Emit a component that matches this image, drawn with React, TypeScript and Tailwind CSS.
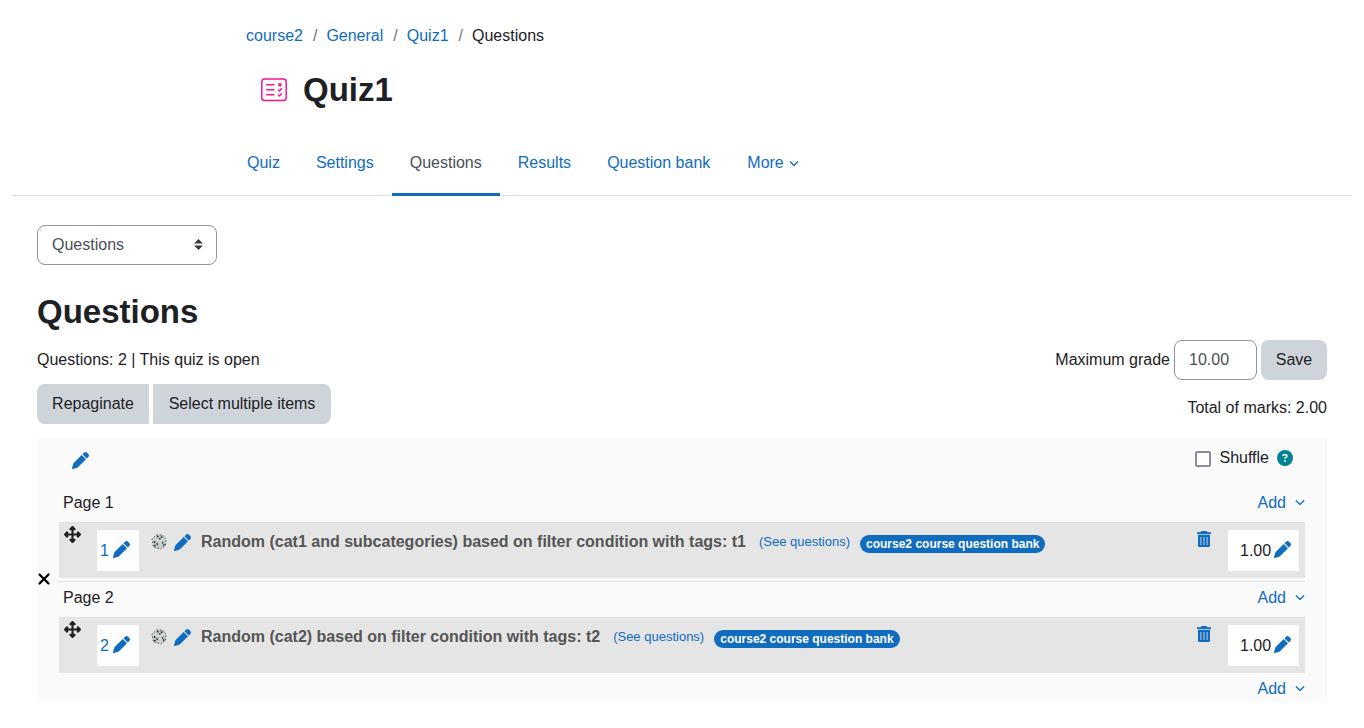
import { FaPen, FaUpDownLeftRight, FaXmark, FaChevronDown, FaCircleQuestion } from 'react-icons/fa6';

const breadcrumbs = ['course2', 'General', 'Quiz1'];

const tabs = ['Quiz', 'Settings', 'Questions', 'Results', 'Question bank'];

const slots = [
  {
    page: 1,
    name: 'Random (cat1 and subcategories) based on filter condition with tags: t1',
    bank: 'course2 course question bank',
    mark: '1.00',
  },
  {
    page: 2,
    name: 'Random (cat2) based on filter condition with tags: t2',
    bank: 'course2 course question bank',
    mark: '1.00',
  },
];

function QuizIcon() {
  return (
    <svg viewBox="0 0 26 24" className="w-[26px] h-6" fill="none" stroke="#f7158b" strokeWidth="1.5" strokeLinecap="round">
      <rect x="0.8" y="1" width="24.4" height="21.6" rx="2.8" />
      <path d="M5.7 6.8h7.2M5.7 11.8h7.2M5.7 16.8h7.2" />
      <path d="M18 5.8l1.8 1.8M19.8 5.8l-1.8 1.8" strokeWidth="1.7" />
      <path d="M17.5 12l1 1 2-2.2M17.5 17l1 1 2-2.2" />
    </svg>
  );
}

function TrashIcon() {
  return (
    <svg viewBox="0 0 14 16" className="w-[14px] h-4" fill="currentColor">
      <path d="M4.5 0h5l.8 1.2H14v1.9H0V1.2h3.7z" />
      <path
        fillRule="evenodd"
        d="M1 3.8h12v10.7a1.500 1.500 0 0 1-1.500 1.500h-9A1.500 1.500 0 0 1 1 14.500zM3.500 6v8h.8V6zM6.600 6v8h.8V6zM9.700 6v8h.8V6z"
      />
    </svg>
  );
}

function DiceIcon() {
  return (
    <svg viewBox="0 0 16 16" className="w-4 h-4 shrink-0">
      <path d="M5.5 1h6l3.5 4-.5 6.5L9.500 15 2.500 13 1 5z" fill="#c0c9c5" />
      <path
        d="M5.5 1h6l3.5 4-.5 6.5L9.500 15 2.500 13 1 5z"
        fill="none"
        stroke="#3c4441"
        strokeWidth="0.9"
        strokeDasharray="1.6 1.6"
      />
      <path d="M1.5 5l7.5 1.7L14.5 5M9 6.700L9.300 14.500" fill="none" stroke="#e3e8e6" strokeWidth="0.8" />
      <path
        d="M6 2.200h1.600v1.100H6zM9.800 2.600h1.600v1.100H9.800zM8 4.600h1.600v1H8zM3 7.200h1.300v1.500H3zM5.500 9.300h1.300v1.500H5.500zM3.200 11h1.300v1.300H3.200zM11 8h1.100v1.500H11zM12.300 10.300h1.100v1.500h-1.100z"
        fill="#000"
      />
    </svg>
  );
}

function AddMenu() {
  return (
    <button type="button" className="flex items-center gap-[9px] text-[#0f6cbf]">
      Add
      <FaChevronDown className="w-[10px] h-[10px] mb-0.5" />
    </button>
  );
}

function SlotRow({ slot }: { slot: (typeof slots)[number] }) {
  return (
    <div className="flex h-14 border-t border-[#dee2e6] bg-[#e5e5e5] pt-[7px] pl-[5px] pr-1.5">
      <button type="button" aria-label="Move" className="self-start -mt-1 mr-4 text-[#1d2125]">
        <FaUpDownLeftRight className="w-[17px] h-[17px]" />
      </button>
      <div className="flex items-center gap-1 w-[42px] h-[41px] pl-[3px] bg-[#fdfdfd] text-[#0f6cbf]">
        <span>{slot.page}</span>
        <button type="button" aria-label="Edit question number" className="mb-0.5">
          <FaPen className="w-[17px] h-[17px]" />
        </button>
      </div>
      <div className="flex flex-1 items-center h-6 pl-3">
        <DiceIcon />
        <button type="button" aria-label="Edit question" className="ml-[7px] mr-[10px] text-[#0f6cbf]">
          <FaPen className="w-[17px] h-[17px]" />
        </button>
        <span className="font-bold text-[#555]">{slot.name}</span>
        <a href="#" className="ml-[13px] text-[13px] text-[#0f6cbf]">(See questions)</a>
        <a href="#" className="mt-1 ml-[10px] px-[6px] rounded-full bg-[#0f6cbf] text-xs leading-[18px] font-bold text-white">
          {slot.bank}
        </a>
      </div>
      <button type="button" aria-label="Delete" className="self-start mt-px mr-[17px] text-[#0f6cbf]">
        <TrashIcon />
      </button>
      <div className="flex items-center gap-[3px] w-[71px] h-[41px] pl-3 bg-white">
        <span>{slot.mark}</span>
        <button type="button" aria-label="Edit maximum mark" className="mb-0.5 text-[#0f6cbf]">
          <FaPen className="w-[17px] h-[17px]" />
        </button>
      </div>
    </div>
  );
}

export default function App() {
  return (
    <div className="px-3 pb-6 bg-white font-['Liberation_Sans',Arial,sans-serif] text-base leading-6 text-[#1d2125]">
      <header className="w-full max-w-[872px] mx-auto pt-6">
        <nav aria-label="Breadcrumb">
          <ol className="flex">
            {breadcrumbs.map((item) => (
              <li key={item} className="flex">
                <a href="#" className="text-[#0f6cbf]">{item}</a>
                <span className="pl-[10px] pr-[9px] text-[#6a737b]">/</span>
              </li>
            ))}
            <li aria-current="page">Questions</li>
          </ol>
        </nav>
        <div className="flex items-center gap-4 h-10 mt-[22px] pl-[15px]">
          <QuizIcon />
          <h1 className="text-[33px] leading-10 font-bold">Quiz1</h1>
        </div>
      </header>

      <nav className="mt-5 border-b border-[#dee2e6]">
        <ul className="flex w-full max-w-[906px] mx-auto">
          {tabs.map((tab) => (
            <li key={tab}>
              <a
                href="#"
                className={
                  tab === 'Questions'
                    ? 'block h-[66px] -mb-px px-[18px] pt-[21px] border-b-3 border-[#0f6cbf] text-[#495057]'
                    : 'block px-[18px] pt-[21px] text-[#0f6cbf]'
                }
              >
                {tab}
              </a>
            </li>
          ))}
          <li>
            <button type="button" className="flex items-center gap-[5px] px-[19px] pt-[21px] text-[#0f6cbf]">
              More
              <FaChevronDown className="w-[10px] h-[10px]" />
            </button>
          </li>
        </ul>
      </nav>

      <main className="px-[25px] pt-[29px]">
        <div className="relative w-[180px]">
          <select
            aria-label="Quiz question navigation"
            className="appearance-none w-full h-10 px-[14px] border border-[#8f959e] rounded-lg bg-white text-[#495057]"
          >
            <option>Questions</option>
          </select>
          <svg viewBox="0 0 4 5" className="absolute right-[14px] top-[14px] w-[9px] h-[11px] pointer-events-none" fill="#343a40">
            <path d="M2 0L0 2h4zm0 5L0 3h4z" />
          </svg>
        </div>

        <h2 className="mt-[27px] text-[33px] leading-10 font-bold">Questions</h2>

        <div className="flex justify-between mt-2">
          <div>
            <p className="py-2">Questions: 2 | This quiz is open</p>
            <div className="flex gap-1 mt-1">
              <button type="button" className="h-10 w-28 rounded-l-lg bg-[#ced4da]">Repaginate</button>
              <button type="button" className="h-10 w-[178px] rounded-r-lg bg-[#ced4da]">Select multiple items</button>
            </div>
          </div>
          <div>
            <form className="flex items-center justify-end gap-1">
              <label htmlFor="maxgrade">Maximum grade</label>
              <input
                id="maxgrade"
                type="text"
                defaultValue="10.00"
                className="w-[83px] h-10 px-[14px] border border-[#8f959e] rounded-lg text-[#495057]"
              />
              <button type="button" className="w-[66px] h-10 rounded-lg bg-[#ced4da]">Save</button>
            </form>
            <p className="mt-4 text-right">Total of marks: 2.00</p>
          </div>
        </div>

        <section className="mt-[15px] px-[22px] pb-px bg-[#fafafa]">
          <div className="flex justify-between items-start h-12 pt-[7px] px-3">
            <button type="button" aria-label="Edit heading" className="mt-[6px] ml-px text-[#0f6cbf]">
              <FaPen className="w-[17px] h-[17px]" />
            </button>
            <div className="flex items-center">
              <input
                id="shuffle"
                type="checkbox"
                className="appearance-none w-4 h-4 mt-0.5 mr-2 border-2 border-[#8f8b9e] rounded-xs bg-white"
              />
              <label htmlFor="shuffle">Shuffle</label>
              <button type="button" aria-label="Help with Shuffle" className="ml-2 text-[#008196]">
                <FaCircleQuestion className="w-4 h-4" />
              </button>
            </div>
          </div>

          <ul>
            {slots.map((slot, i) => (
              <li key={slot.page}>
                <div className="flex justify-between pt-1 pb-[7px] pl-1">
                  <span>Page {slot.page}</span>
                  <AddMenu />
                </div>
                <SlotRow slot={slot} />
                {i < slots.length - 1 && (
                  <div className="relative h-1 border-b border-[#dee2e6]">
                    <button type="button" aria-label="Remove page break" className="absolute -left-6 -top-2 text-black">
                      <FaXmark className="w-[18px] h-[18px]" />
                    </button>
                  </div>
                )}
              </li>
            ))}
          </ul>
          <div className="flex justify-end pt-1">
            <AddMenu />
          </div>
        </section>
      </main>
    </div>
  );
}
